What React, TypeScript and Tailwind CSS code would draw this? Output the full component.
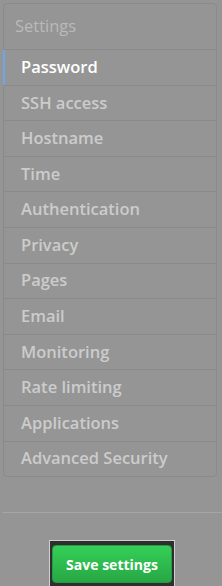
import { useState } from 'react';

const items = [
  'Password',
  'SSH access',
  'Hostname',
  'Time',
  'Authentication',
  'Privacy',
  'Pages',
  'Email',
  'Monitoring',
  'Rate limiting',
  'Applications',
  'Advanced Security',
];

export default function App() {
  const [active, setActive] = useState('Password');

  return (
    <div
      className="w-[222px] h-[586px] overflow-hidden bg-[#959595] pt-[3px]"
      style={{ fontFamily: '"Open Sans", "Noto Sans", sans-serif' }}
    >
      {/* Sidebar menu */}
      <nav className="mx-[3px] w-[214px] border border-[#8a8a8a] rounded-[4px]">
        <div className="h-[45px] pl-[11px] flex items-center text-[16.5px] text-[#bababa]">
          Settings
        </div>
        {items.map(item => (
          <button
            key={item}
            onClick={() => setActive(item)}
            className={`relative w-full h-[35.6px] border-t border-[#8a8a8a] pl-[17px] flex items-center text-left text-[16.5px] font-semibold ${
              active === item ? 'text-white font-bold' : 'text-[#cccccc]'
            }`}
          >
            {active === item && (
              <span className="absolute -left-px top-0 bottom-0 w-[2px] bg-[#6fa6e6]" />
            )}
            {item}
          </button>
        ))}
      </nav>

      <div className="mt-[35px] h-px bg-[#a6a6a6] ml-[3px]" />

      {/* Save button */}
      <div className="mt-[27px] flex justify-center">
        <div className="ml-[2px] border border-[#cfcfcf] bg-[#2e2e2e] px-[2px] pt-[4px] pb-[4px]">
          <button className="w-[120px] h-[38px] rounded-[4px] border border-[#259a43] bg-gradient-to-b from-[#34d058] to-[#28a745] text-white text-[14px] font-bold">
            Save settings
          </button>
        </div>
      </div>
    </div>
  );
}
